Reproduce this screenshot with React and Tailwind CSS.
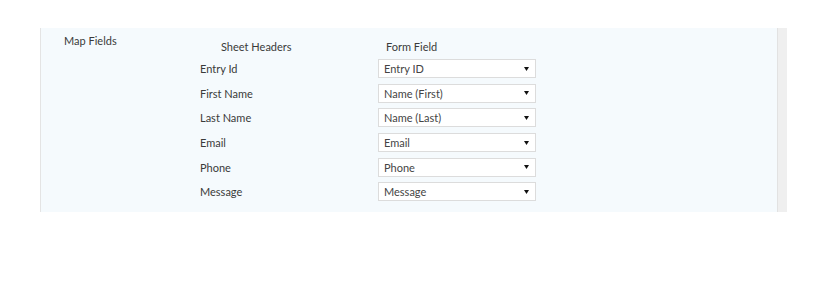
import React from "react";

const rows = [
  { label: "Entry Id", value: "Entry ID" },
  { label: "First Name", value: "Name (First)" },
  { label: "Last Name", value: "Name (Last)" },
  { label: "Email", value: "Email" },
  { label: "Phone", value: "Phone" },
  { label: "Message", value: "Message" },
];

const FieldSelect = ({ value }) => {
  return (
    <div className="flex items-center justify-between w-[158px] h-[19px] bg-white border border-[#dcdcdc] pl-[5px] pr-[6px] text-[#444]">
      <span>{value}</span>
      <svg width="5" height="4" viewBox="0 0 5 4">
        <path d="M0 0h5L2.5 4Z" fill="#111" />
      </svg>
    </div>
  );
};

const App = () => {
  return (
    <div className="w-[820px] h-[300px] bg-white font-['Lato',sans-serif] text-[11px] leading-[15px] text-[#3a3a3a]">
      <div className="flex pt-[28px] pl-[40px]">
        <div className="flex w-[737px] h-[184px] bg-[#f5fafd] border-l border-[#e4e4e4]">
          <div className="w-[159px] pl-[23px] pt-[5px]">Map Fields</div>
          <div className="pt-[11px]">
            <div className="flex">
              <div className="pl-[21px] w-[186px]">Sheet Headers</div>
              <div>Form Field</div>
            </div>
            <div className="flex flex-col gap-[5.7px] mt-[5px]">
              {rows.map((row) => (
                <div key={row.label} className="flex items-center">
                  <div className="w-[178px]">{row.label}</div>
                  <FieldSelect value={row.value} />
                </div>
              ))}
            </div>
          </div>
        </div>
        <div className="w-[10px] h-[184px] bg-[#efefef] border-l border-[#e2e2e2]"></div>
      </div>
    </div>
  );
};

export default App;
